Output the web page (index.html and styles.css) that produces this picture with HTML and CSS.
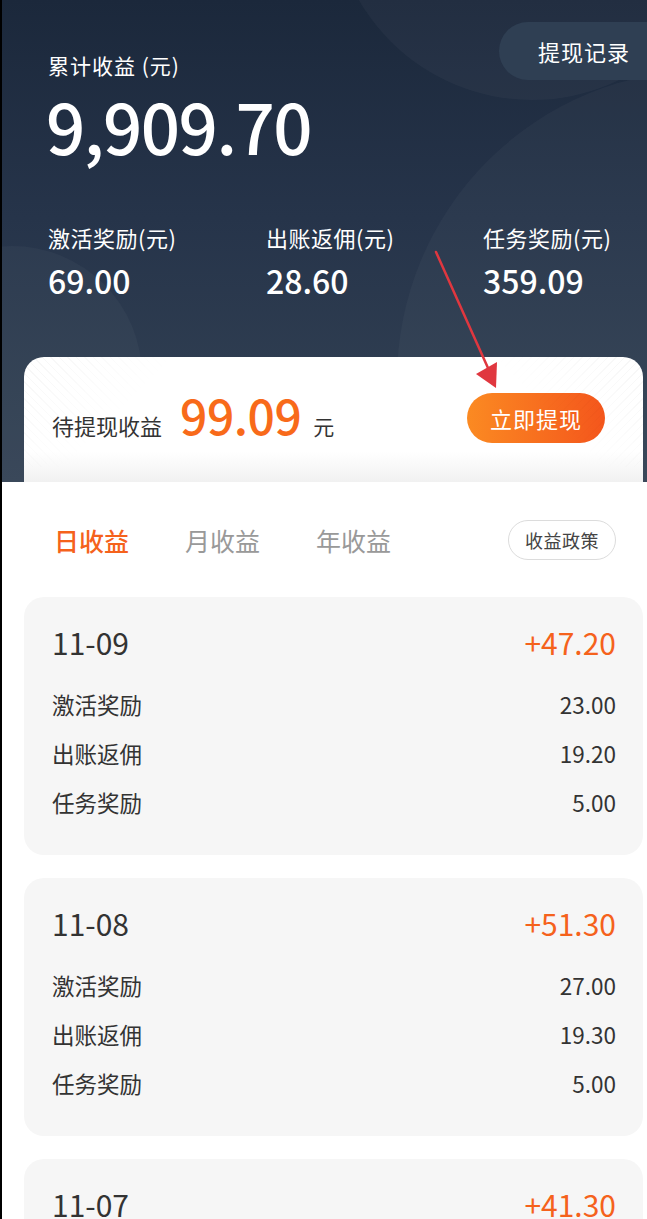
FILE: index.html
```html
<!DOCTYPE html>
<html lang="zh-CN">
<head>
  <meta charset="UTF-8">
  <meta name="viewport" content="width=device-width, initial-scale=1.0">
  <title>我的收益</title>
  <link rel="stylesheet" href="styles.css">
</head>
<body>
  <div class="page">
    <header class="hero">
      <div class="bubble bubble-top"></div>
      <div class="bubble bubble-right"></div>
      <div class="bubble bubble-left"></div>

      <div class="hero-top">
        <div class="hero-title">累计收益 (元)</div>
        <button class="record-btn">提现记录</button>
      </div>
      <div class="hero-total">9,909.70</div>

      <div class="stats">
        <div class="stat">
          <div class="stat-label">激活奖励(元)</div>
          <div class="stat-value">69.00</div>
        </div>
        <div class="stat">
          <div class="stat-label">出账返佣(元)</div>
          <div class="stat-value">28.60</div>
        </div>
        <div class="stat">
          <div class="stat-label">任务奖励(元)</div>
          <div class="stat-value">359.09</div>
        </div>
      </div>

      <div class="withdraw-card">
        <div class="withdraw-info">
          <span class="withdraw-label">待提现收益</span>
          <span class="withdraw-amount">99.09</span>
          <span class="withdraw-unit">元</span>
        </div>
        <button class="withdraw-btn">立即提现</button>
      </div>
    </header>

    <main class="content">
      <div class="tabs">
        <div class="tab active">日收益</div>
        <div class="tab">月收益</div>
        <div class="tab">年收益</div>
        <button class="policy-btn">收益政策</button>
      </div>

      <section class="day-card">
        <div class="day-head">
          <span class="day-date">11-09</span>
          <span class="day-sum">+47.20</span>
        </div>
        <div class="day-row"><span>激活奖励</span><span>23.00</span></div>
        <div class="day-row"><span>出账返佣</span><span>19.20</span></div>
        <div class="day-row"><span>任务奖励</span><span>5.00</span></div>
      </section>

      <section class="day-card">
        <div class="day-head">
          <span class="day-date">11-08</span>
          <span class="day-sum">+51.30</span>
        </div>
        <div class="day-row"><span>激活奖励</span><span>27.00</span></div>
        <div class="day-row"><span>出账返佣</span><span>19.30</span></div>
        <div class="day-row"><span>任务奖励</span><span>5.00</span></div>
      </section>

      <section class="day-card">
        <div class="day-head">
          <span class="day-date">11-07</span>
          <span class="day-sum">+41.30</span>
        </div>
        <div class="day-row"><span>激活奖励</span><span>22.00</span></div>
        <div class="day-row"><span>出账返佣</span><span>14.30</span></div>
        <div class="day-row"><span>任务奖励</span><span>5.00</span></div>
      </section>
    </main>

    <!-- annotation arrow drawn over the page -->
    <svg class="pointer" width="80" height="150" viewBox="0 0 80 150">
      <line x1="3" y1="2" x2="55" y2="118" stroke="#e0373f" stroke-width="2.5" stroke-linecap="round"/>
      <polygon points="43,124 64,112 63,138" fill="#e0373f"/>
    </svg>
  </div>
</body>
</html>
```

FILE: styles.css
```css
* {
  box-sizing: border-box;
}

html,
body {
  margin: 0;
  padding: 0;
  background: #000;
}

body {
  font-family: "Noto Sans CJK SC", "Noto Sans", sans-serif;
  color: #333;
}

button {
  font-family: inherit;
  border: none;
  cursor: pointer;
}

.page {
  position: relative;
  width: 645px;
  height: 1219px;
  margin-left: 2px;
  background: #fff;
  overflow: hidden;
}

/* top dark area */
.hero {
  position: relative;
  display: flex;
  flex-direction: column;
  height: 482px;
  padding-top: 22px;
  background: linear-gradient(180deg, #1b283b 0%, #26344a 45%, #344355 100%);
  color: #fff;
  overflow: hidden;
}

.bubble {
  position: absolute;
  border-radius: 50%;
  background: rgba(255, 255, 255, 0.03);
}

.bubble-top {
  width: 400px;
  height: 400px;
  left: 330px;
  top: -300px;
}

.bubble-right {
  width: 620px;
  height: 620px;
  left: 395px;
  top: 70px;
}

.bubble-left {
  width: 260px;
  height: 260px;
  left: -120px;
  top: 246px;
}

.hero-top {
  position: relative;
  display: flex;
  justify-content: space-between;
  align-items: flex-start;
}

.hero-title {
  margin: 29px 0 0 46px;
  font-size: 21px;
  line-height: 28px;
  letter-spacing: 1px;
}

.record-btn {
  height: 58px;
  padding: 0 17px 0 39px;
  border-radius: 29px 0 0 29px;
  background: #2f3f53;
  color: #fff;
  font-size: 22px;
  letter-spacing: 1px;
}

.hero-total {
  position: relative;
  margin: 12px 0 0 44px;
  font-size: 69px;
  font-weight: 500;
  line-height: 66px;
  letter-spacing: -1.5px;
}

.stats {
  position: relative;
  display: grid;
  grid-template-columns: 218px 217px 180px;
  margin: 64px 0 0 46px;
}

.stat-label {
  font-size: 22px;
  line-height: 30px;
  letter-spacing: 0.5px;
}

.stat-value {
  margin-top: 8px;
  font-size: 32px;
  font-weight: 500;
  line-height: 40px;
}

/* pending withdrawal card */
.withdraw-card {
  position: relative;
  display: flex;
  justify-content: space-between;
  align-items: center;
  flex: none;
  height: 125px;
  margin: auto 4px 0 22px;
  padding: 0 38px 0 28px;
  border-radius: 20px 20px 0 0;
  background: linear-gradient(180deg, #fff 0%, #fff 76%, #f1f1f1 100%);
  color: #333;
}

.withdraw-card::before,
.withdraw-card::after {
  content: "";
  position: absolute;
  top: 0;
  width: 150px;
  height: 110px;
  background: repeating-linear-gradient(45deg, rgba(0, 0, 0, 0.035) 0 1px, transparent 1px 6px);
  pointer-events: none;
}

.withdraw-card::before {
  left: 0;
  border-top-left-radius: 20px;
  -webkit-mask-image: linear-gradient(135deg, #000 0%, transparent 60%);
  mask-image: linear-gradient(135deg, #000 0%, transparent 60%);
}

.withdraw-card::after {
  right: 0;
  border-top-right-radius: 20px;
  background: repeating-linear-gradient(-45deg, rgba(0, 0, 0, 0.035) 0 1px, transparent 1px 6px);
  -webkit-mask-image: linear-gradient(225deg, #000 0%, transparent 60%);
  mask-image: linear-gradient(225deg, #000 0%, transparent 60%);
}

.withdraw-info {
  position: relative;
  display: flex;
  align-items: baseline;
  margin-top: -12px;
}

.withdraw-label {
  font-size: 22px;
}

.withdraw-amount {
  margin: 0 12px 0 18px;
  color: #f86a1a;
  font-size: 48px;
  font-weight: 500;
  line-height: 56px;
  letter-spacing: -0.5px;
}

.withdraw-unit {
  font-size: 21px;
}

.withdraw-btn {
  position: relative;
  width: 138px;
  height: 50px;
  margin-top: -4px;
  border-radius: 25px;
  background: linear-gradient(90deg, #fb8a22 0%, #f4561c 100%);
  color: #fff;
  font-size: 22px;
  letter-spacing: 1px;
}

/* white lower area */
.content {
  padding: 38px 4px 0 22px;
}

.tabs {
  display: flex;
  align-items: center;
  height: 40px;
  padding: 0 27px 0 30px;
  margin-bottom: 37px;
}

.tab {
  margin-right: 56px;
  color: #999;
  font-size: 25px;
}

.tab.active {
  color: #f5621c;
  font-weight: 500;
}

.policy-btn {
  margin-left: auto;
  height: 40px;
  padding: 0 16px;
  border: 1px solid #dcdcdc;
  border-radius: 20px;
  background: #fff;
  color: #444;
  font-size: 18px;
  letter-spacing: 0.5px;
}

.day-card {
  margin-bottom: 23px;
  padding: 25px 27px 28px 28px;
  border-radius: 20px;
  background: #f6f6f6;
}

.day-head {
  display: flex;
  justify-content: space-between;
  align-items: center;
  height: 40px;
  margin-bottom: 18px;
}

.day-date {
  color: #333;
  font-size: 30px;
}

.day-sum {
  color: #f5621c;
  font-size: 30px;
}

.day-row {
  display: flex;
  justify-content: space-between;
  height: 49px;
  line-height: 49px;
  color: #333;
  font-size: 22.5px;
}

.pointer {
  position: absolute;
  left: 431px;
  top: 250px;
}
```
